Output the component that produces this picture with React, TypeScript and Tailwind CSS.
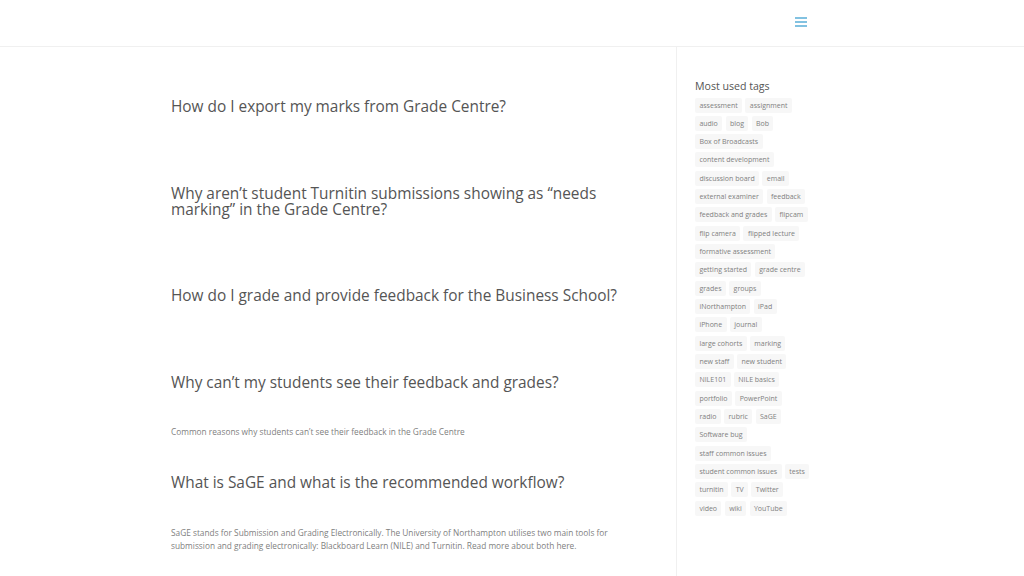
const rows = [
  ["assessment", "assignment"],
  ["audio", "blog", "Bob"],
  ["Box of Broadcasts"],
  ["content development"],
  ["discussion board", "email"],
  ["external examiner", "feedback"],
  ["feedback and grades", "flipcam"],
  ["flip camera", "flipped lecture"],
  ["formative assessment"],
  ["getting started", "grade centre"],
  ["grades", "groups"],
  ["iNorthampton", "iPad"],
  ["iPhone", "journal"],
  ["large cohorts", "marking"],
  ["new staff", "new student"],
  ["NILE101", "NILE basics"],
  ["portfolio", "PowerPoint"],
  ["radio", "rubric", "SaGE"],
  ["Software bug"],
  ["staff common issues"],
  ["student common issues", "tests"],
  ["turnitin", "TV", "Twitter"],
  ["video", "wiki", "YouTube"],
];

function H({ children, className }: { children: React.ReactNode; className: string }) {
  return <h2 className={`text-[15.4px] leading-[16px] font-normal text-[#555] ${className}`}>{children}</h2>;
}

export default function App() {
  return (
    <div className="w-[1024px] h-[576px] overflow-hidden bg-white font-['Open_Sans',sans-serif] antialiased">
      <header className="h-[47px] border-b border-[#f0f0f0] flex justify-end items-center pr-[216px]">
        <svg width="14" height="12" viewBox="0 0 14 12" className="mt-[-2px]">
          <path d="M1 2h12M1 6h12M1 10h12" stroke="#5aaed8" strokeWidth="1.5" fill="none" />
        </svg>
      </header>
      <div className="flex h-[529px]">
        <main className="w-[676px] pl-[171px] pr-[40px] pt-[52px]">
          <H className="">How do I export my marks from Grade Centre?</H>
          <H className="mt-[71px]">Why aren’t student Turnitin submissions showing as “needs marking” in the Grade Centre?</H>
          <H className="mt-[70px]">How do I grade and provide feedback for the Business School?</H>
          <H className="mt-[71px]">Why can’t my students see their feedback and grades?</H>
          <p className="mt-[34px] text-[8.3px] leading-[13px] text-[#808080]">Common reasons why students can’t see their feedback in the Grade Centre</p>
          <H className="mt-[37px]">What is SaGE and what is the recommended workflow?</H>
          <p className="mt-[35px] text-[8.3px] leading-[13px] text-[#808080]">SaGE stands for Submission and Grading Electronically. The University of Northampton utilises two main tools for<br />submission and grading electronically: Blackboard Learn (NILE) and Turnitin. Read more about both here.</p>
        </main>
        <aside className="flex-1 border-l border-[#f0f0f0] pl-[18px] pt-[32px]">
          <h3 className="text-[10.6px] leading-[15px] font-normal text-[#555]">Most used tags</h3>
          <div className="mt-[3.5px] flex flex-col gap-[3.33px]">
            {rows.map((r, i) => (
              <div key={i} className="flex gap-[3.3px]">
                {r.map((t) => (
                  <span key={t} className="h-[15px] px-[4.4px] bg-[#f7f7f7] rounded-[2px] text-[7px] leading-[15px] text-[#808080]">{t}</span>
                ))}
              </div>
            ))}
          </div>
        </aside>
      </div>
    </div>
  );
}
